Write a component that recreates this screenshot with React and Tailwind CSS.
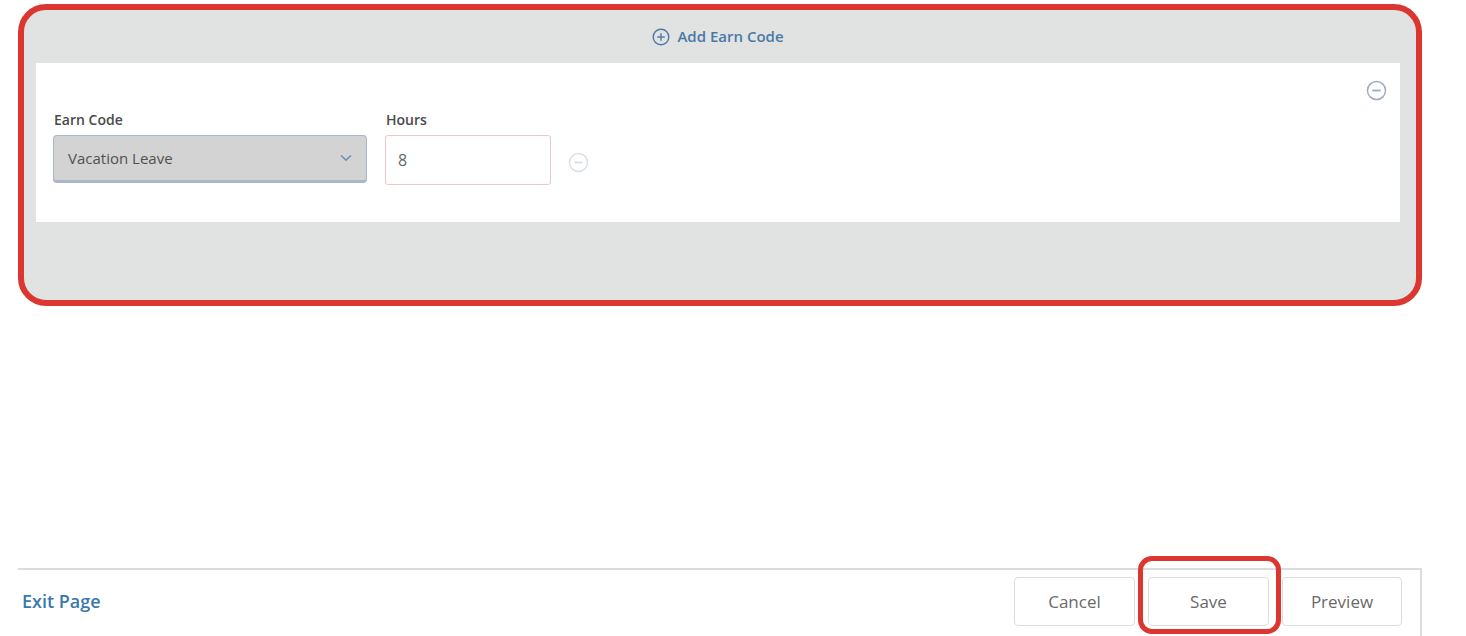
import React from 'react';

const MinusCircle = ({ className }) => (
    <svg viewBox="0 0 20 20" className={className} fill="none" stroke="currentColor" strokeWidth="1.4">
        <circle cx="10" cy="10" r="8.6" />
        <line x1="6" y1="10" x2="14" y2="10" strokeWidth="1.8" />
    </svg>
);

const PlusCircle = ({ className }) => (
    <svg viewBox="0 0 18 18" className={className} fill="none" stroke="currentColor" strokeWidth="1.4">
        <circle cx="9" cy="9" r="7.8" />
        <line x1="5.2" y1="9" x2="12.8" y2="9" />
        <line x1="9" y1="5.2" x2="9" y2="12.8" />
    </svg>
);

const App = () => {
    return (
        <div className="h-[636px] w-[1466px] bg-white overflow-hidden flex flex-col font-['Open_Sans',sans-serif]">
            {/* Earn code panel */}
            <div className="ml-[18px] mt-[4px] w-[1404px] h-[302px] rounded-[28px] border-[6px] border-[#dc3631] bg-[#e1e3e3] flex flex-col">
                <div className="h-[53px] flex items-center justify-center gap-[7px] text-[#4b79a6] pr-[4px]">
                    <PlusCircle className="w-[18px] h-[18px]" />
                    <span className="text-[15px] font-semibold">Add Earn Code</span>
                </div>
                <div className="ml-[12px] mr-[16px] h-[159px] bg-white flex flex-col px-[17px]">
                    <div className="flex justify-end pt-[17px] -mr-[4px]">
                        <MinusCircle className="w-[21px] h-[21px] text-[#9eacbb]" />
                    </div>
                    <div className="flex items-start mt-[8px]">
                        <div className="flex flex-col">
                            <label className="text-[14px] font-semibold text-[#4a4a4a] pl-[1px] mb-[5px]">Earn Code</label>
                            <div className="w-[314px] h-[48px] rounded-[4px] border-[1.5px] border-[#a9b8c6] border-b-[3px] bg-[#d3d3d3] flex items-center justify-between pl-[14px] pr-[14px]">
                                <span className="text-[15px] font-medium text-[#515151]">Vacation Leave</span>
                                <svg viewBox="0 0 12 8" className="w-[12px] h-[8px] text-[#7590ad]" fill="none" stroke="currentColor" strokeWidth="1.6">
                                    <path d="M1 1.5 L6 6.2 L11 1.5" />
                                </svg>
                            </div>
                        </div>
                        <div className="flex flex-col ml-[18px]">
                            <label className="text-[14px] font-semibold text-[#4a4a4a] pl-[1px] mb-[5px]">Hours</label>
                            <div className="w-[166px] h-[50px] rounded-[3px] border-[1.5px] border-[#eec5c9] bg-white flex items-center pl-[12px]">
                                <span className="text-[16px] text-[#666]">8</span>
                            </div>
                        </div>
                        <div className="ml-[17px] self-end mb-[12px]">
                            <MinusCircle className="w-[21px] h-[21px] text-[#dbe0e6]" />
                        </div>
                    </div>
                </div>
            </div>

            {/* Footer */}
            <div className="mt-[262px] ml-[18px] w-[1404px] h-[68px] border-t-2 border-r-2 border-[#dcdcdc] flex items-start justify-between">
                <a className="mt-[18px] ml-[4px] text-[18px] font-semibold text-[#3b78ab]">Exit Page</a>
                <div className="flex items-center gap-[13px] mt-[7px] mr-[18px]">
                    <button className="w-[121px] h-[49px] rounded-[4px] border border-[#dedede] bg-white text-[17px] text-[#6a6a6a]">Cancel</button>
                    <div className="relative">
                        <button className="w-[121px] h-[49px] rounded-[4px] border border-[#dedede] bg-white text-[17px] text-[#6a6a6a]">Save</button>
                        <div className="absolute -left-[10px] -right-[12px] -top-[21px] -bottom-[8px] rounded-[14px] border-[5px] border-[#dc3631] pointer-events-none"></div>
                    </div>
                    <button className="w-[120px] h-[49px] rounded-[4px] border border-[#dedede] bg-white text-[17px] text-[#6a6a6a]">Preview</button>
                </div>
            </div>
        </div>
    );
};

export default App;
